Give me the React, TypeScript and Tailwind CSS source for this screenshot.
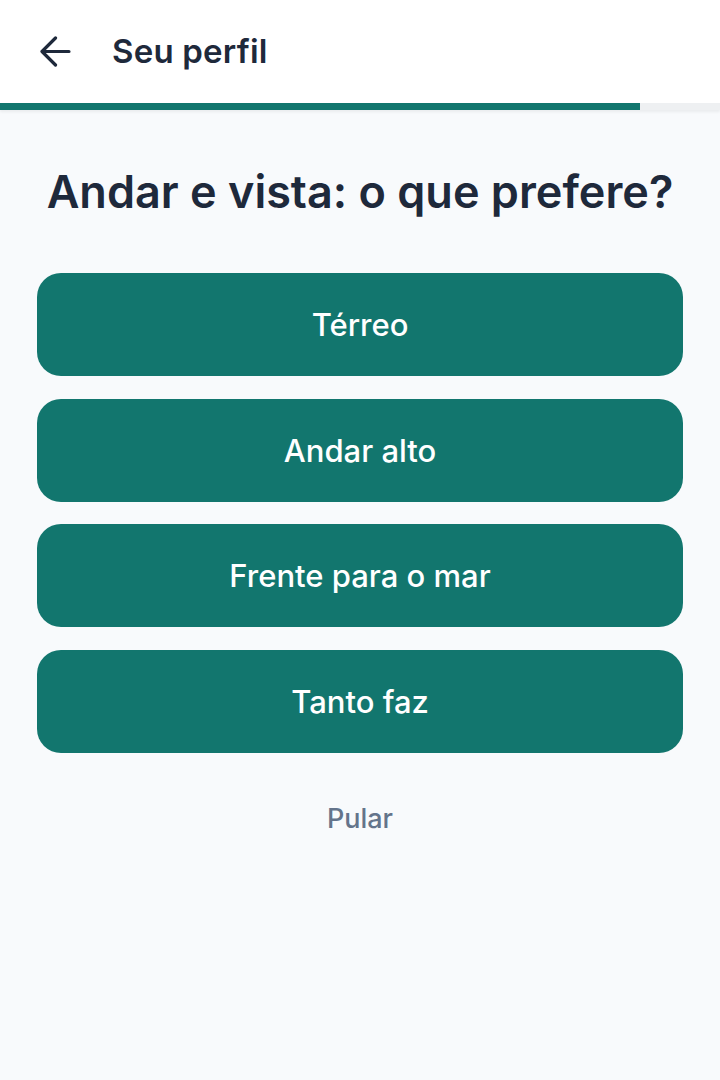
import React from "react";

export default function App() {
  const options = ["Térreo", "Andar alto", "Frente para o mar", "Tanto faz"];
  return (
    <div
      className="w-[720px] min-h-[1080px] bg-[#f8fafc] flex flex-col"
      style={{ fontFamily: "Inter, 'Noto Sans', sans-serif" }}
    >
      <header className="h-[103px] bg-white flex items-center pl-[40px]">
        <svg width="31" height="31" viewBox="0 0 31 31" fill="none" className="mr-[41px]">
          <path d="M29 15.5H3M15.5 2L2 15.5L15.5 29" stroke="#1e293b" strokeWidth="3.2" strokeLinecap="round" strokeLinejoin="round" />
        </svg>
        <h1 className="text-[33px] leading-[40px] font-semibold text-[#1e293b] tracking-[0.2px] pb-[2px]">Seu perfil</h1>
      </header>
      <div className="h-[7px] bg-[#eef0f2] flex shadow-[0_2px_3px_rgba(0,0,0,0.06)]">
        <div className="w-[640px] h-full bg-[#12766e]" />
      </div>
      <main className="flex flex-col px-[37px]">
        <h2 className="mt-[55px] text-center text-[45px] leading-[54px] font-semibold text-[#1e293b]">
          Andar e vista: o que prefere?
        </h2>
        <div className="mt-[54px] flex flex-col gap-[22.6px]">
          {options.map((o) => (
            <button
              key={o}
              className="h-[103px] w-full rounded-[24px] bg-[#12766e] text-white text-[31px] font-medium flex items-center justify-center pt-[2px]"
            >
              {o}
            </button>
          ))}
        </div>
        <button className="mt-[50px] self-center text-[27px] leading-[32px] font-medium text-[#64748b]">
          Pular
        </button>
      </main>
    </div>
  );
}
